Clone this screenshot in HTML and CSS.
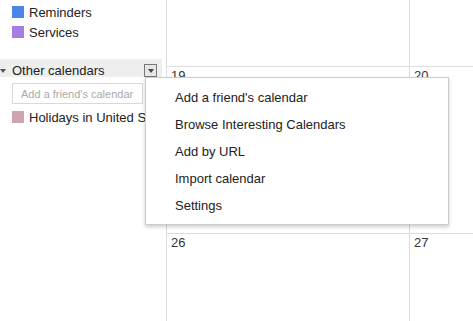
FILE: index.html
```html
<!DOCTYPE html>
<html lang="en">
<head>
  <meta charset="UTF-8">
  <title>Calendar</title>
  <link rel="stylesheet" href="styles.css">
</head>
<body>
  <div id="page">
    <div id="sidebar">
      <div class="cal-item"><span class="swatch blue"></span>Reminders</div>
      <div class="cal-item"><span class="swatch purple"></span>Services</div>
      <div class="section-head">
        <span class="label"><span class="caret"></span>Other calendars</span>
        <span class="menu-btn"><span class="btn-caret"></span></span>
      </div>
      <input class="friend" type="text" placeholder="Add a friend's calendar">
      <div class="cal-item"><span class="swatch pink"></span>Holidays in United States</div>
    </div>
    <div id="month">
      <div class="cell"></div>
      <div class="cell"></div>
      <div class="cell"><span class="day">19</span></div>
      <div class="cell"><span class="day">20</span></div>
      <div class="cell"><span class="day">26</span></div>
      <div class="cell"><span class="day">27</span></div>
    </div>
  </div>
  <div id="menu">
    <div class="menu-item">Add a friend's calendar</div>
    <div class="menu-item">Browse Interesting Calendars</div>
    <div class="menu-item">Add by URL</div>
    <div class="menu-item">Import calendar</div>
    <div class="menu-item">Settings</div>
  </div>
</body>
</html>
```

FILE: styles.css
```css
body { margin: 0; background: #fff; color: #222; font-family: "Liberation Sans", Arial, sans-serif; font-size: 13px; overflow: hidden; }
#page { display: flex; height: 321px; overflow: hidden; }
#sidebar { flex: none; width: 162px; margin-right: 4px; padding-top: 2px; white-space: nowrap; overflow: hidden; }
.cal-item { display: flex; align-items: center; height: 20px; padding-left: 12px; }
.swatch { width: 12px; height: 12px; margin-right: 5px; flex: none; }
.blue { background: #4a86e8; }
.purple { background: #a67de2; }
.pink { background: #cfa5ad; }
.section-head {
  display: flex; justify-content: space-between; align-items: flex-start;
  height: 18px; margin-top: 17px; background: #eee;
}
.section-head .label { display: flex; align-items: center; padding-top: 4px; line-height: 16px; }
.caret {
  width: 0; height: 0; margin-right: 6px;
  border-left: 3.5px solid transparent; border-right: 3.5px solid transparent; border-top: 4px solid #555;
}
.menu-btn {
  display: flex; align-items: center; justify-content: center;
  width: 11px; height: 11px; margin: 5px 5px 0 0;
  border: 1px solid #777; background: #e6e6e6;
}
.btn-caret {
  width: 0; height: 0;
  border-left: 3.5px solid transparent; border-right: 3.5px solid transparent; border-top: 4px solid #444;
}
.friend {
  display: block; box-sizing: border-box; width: 131px; height: 21px; margin: 6px 0 3px 12px;
  padding: 0 0 0 8px; border: 1px solid #d9d9d9; font-family: inherit; font-size: 11px; color: #222;
}
.friend::placeholder { color: #aaa; }
#month {
  flex: none; display: grid; grid-template-columns: 243px 243px; grid-template-rows: 66px 167px 1fr;
}
.cell { border-left: 1px solid #ddd; border-top: 1px solid #ddd; padding: 0 4px; }
.cell:nth-child(1), .cell:nth-child(2) { border-top: none; }
.day { display: block; line-height: 16px; padding-top: 1px; color: #333; }
#menu {
  position: absolute; left: 145px; top: 77px; width: 302px;
  padding: 6px 0 5px; background: #fff; border: 1px solid #ccc;
  box-shadow: 0 2px 4px rgba(0, 0, 0, 0.2);
}
.menu-item { padding-left: 29px; line-height: 27px; color: #222; }
```
